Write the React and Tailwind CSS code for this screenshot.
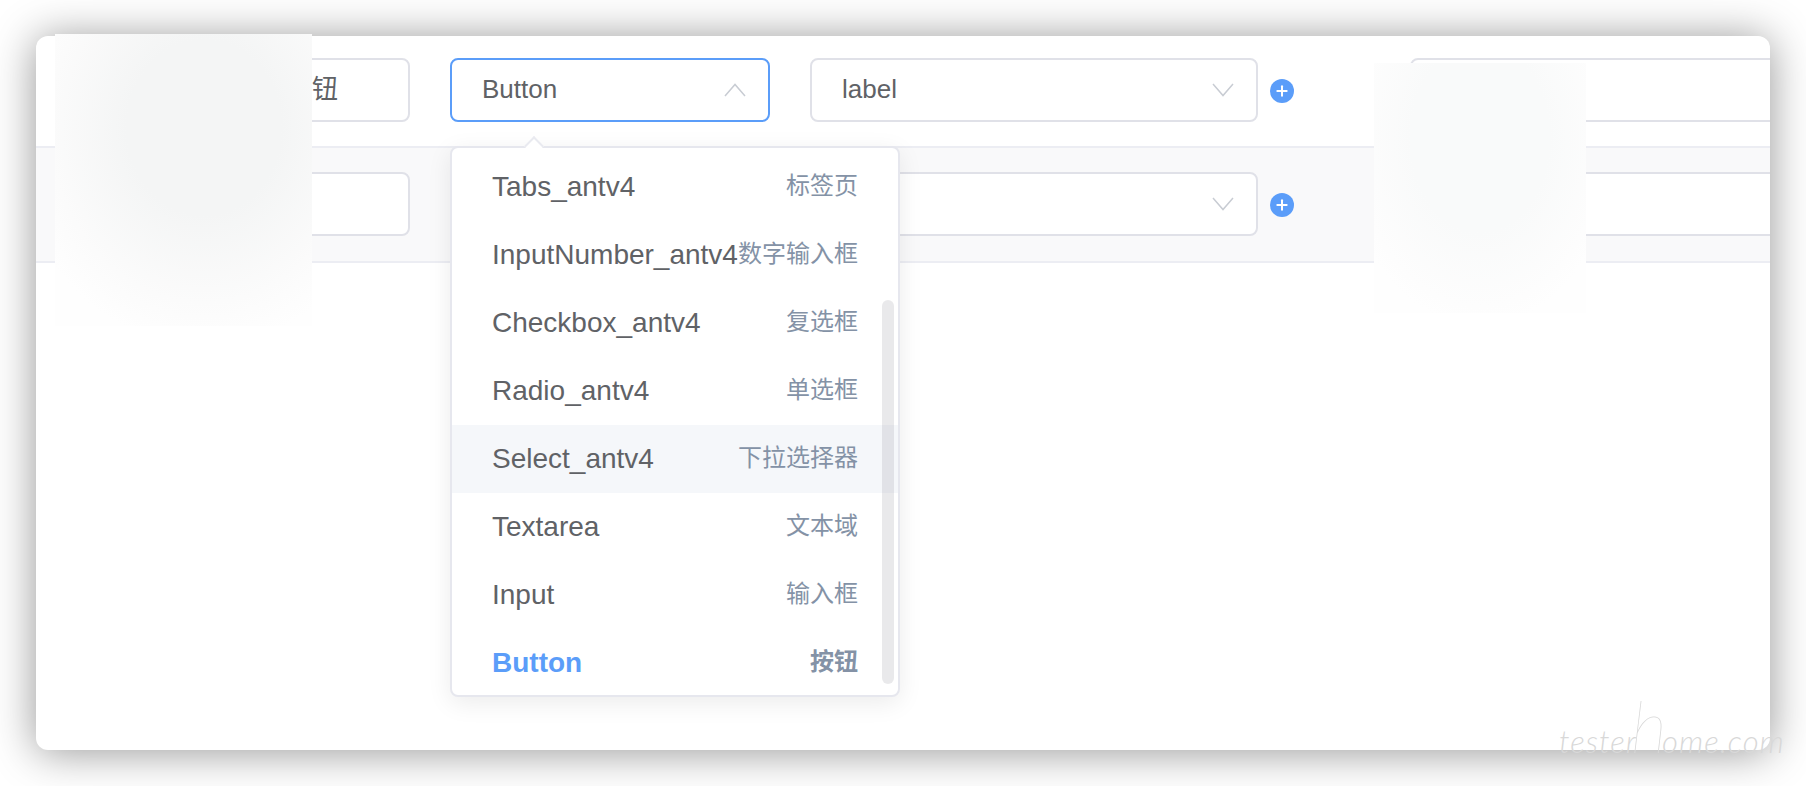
import { Plus } from 'lucide-react';

const options = [
  ['Tabs_antv4', '标签页'],
  ['InputNumber_antv4', '数字输入框'],
  ['Checkbox_antv4', '复选框'],
  ['Radio_antv4', '单选框'],
  ['Select_antv4', '下拉选择器'],
  ['Textarea', '文本域'],
  ['Input', '输入框'],
  ['Button', '按钮'],
];

function Chevron({ up }) {
  return (
    <svg width="22" height="14" viewBox="0 0 22 14" fill="none" stroke="#c8ccd3" strokeWidth="1.5" className="shrink-0">
      <path d={up ? 'M1 13 L11 1.5 L21 13' : 'M1 1 L11 12.5 L21 1'} />
    </svg>
  );
}

function TextBox({ value, className }) {
  return (
    <div className={`h-16 shrink-0 rounded-lg border-2 border-[#e0e1e8] bg-white flex items-center text-[26px] text-[#606266] ${className}`}>
      {value}
    </div>
  );
}

function SelectBox({ value, open, className }) {
  return (
    <div className={`h-16 shrink-0 rounded-lg border-2 bg-white flex items-center justify-between pl-[30px] pr-[22px] text-[26px] text-[#606266] ${open ? 'border-[#5b9df9]' : 'border-[#e0e1e8]'} ${className}`}>
      <span>{value}</span>
      <Chevron up={open} />
    </div>
  );
}

function AddButton() {
  return (
    <div className="w-6 h-6 ml-3 mt-0.5 shrink-0 rounded-full bg-[#5b9df9] flex items-center justify-center">
      <Plus size={16} color="white" strokeWidth={3} />
    </div>
  );
}

function Row({ name, type, field, open, striped }) {
  return (
    <div className={`flex items-center pl-[224px] border-b-2 border-[#ecedf3] ${striped ? 'h-[115px] pb-0.5 bg-[#f9f9fa]' : 'h-[112px] pb-[3px]'}`}>
      <TextBox value={name} className="w-[150px] pl-6" />
      <SelectBox value={type} open={open} className="w-[320px] ml-[40px]" />
      <SelectBox value={field} className="w-[448px] ml-[40px]" />
      <AddButton />
      <TextBox className="w-[500px] ml-[116px]" />
    </div>
  );
}

export default function App() {
  return (
    <div className="relative h-[786px] overflow-hidden bg-white pt-9 px-9 font-['Liberation_Sans','Noto_Sans_CJK_SC',sans-serif]">
      <div className="relative h-[714px] rounded-xl bg-white overflow-hidden shadow-[0_2px_44px_rgba(0,0,0,0.42)]">
        <Row name="按钮" type="Button" field="label" open />
        <Row striped />

        {/* dropdown */}
        <div className="absolute left-[414px] top-[110px] w-[450px] h-[551px] pt-[5px] rounded-lg border-2 border-[#e6e7ee] bg-white shadow-[0_6px_24px_rgba(0,0,0,0.08)] overflow-hidden">
          {options.map(([name, desc]) => {
            const active = name === 'Button';
            return (
              <div key={name} className={`h-[68px] flex items-center justify-between pl-[40px] pr-[40px] ${name === 'Select_antv4' ? 'bg-[#f5f7fa]' : ''}`}>
                <span className={`text-[28px] whitespace-nowrap ${active ? 'font-bold text-[#5b9df9]' : 'text-[#606266]'}`}>{name}</span>
                <span className={`text-[24px] -mt-0.5 whitespace-nowrap ${active ? 'font-bold text-[#8492a6]' : 'text-[#8492a6]'}`}>{desc}</span>
              </div>
            );
          })}
          <div className="absolute right-[4px] top-[152px] w-3 h-[384px] rounded-md bg-[#90939933]" />
        </div>
        <div className="absolute left-[491px] top-[103px] w-[14px] h-[14px] rotate-45 bg-white border-l-2 border-t-2 border-[#e9eaf0]" />
      </div>

      {/* blurred patches */}
      <div className="absolute left-[55px] top-[34px] w-[257px] h-[292px] bg-[radial-gradient(ellipse_75%_75%_at_58%_32%,#f4f5f5_40%,#fbfbfb_80%,#fefefe_100%)]" />
      <div className="absolute left-[1374px] top-[63px] w-[212px] h-[250px] bg-[radial-gradient(ellipse_65%_75%_at_50%_30%,#f9fafa_50%,#fdfdfd_90%,#fefefe_100%)]" />

      <div className="absolute left-[1559px] top-[690px] h-[80px] flex items-baseline text-[31px] leading-[70px] italic font-light tracking-[1px] text-[#d8d8d8] whitespace-nowrap font-['Lato',sans-serif]">
        <span>tester</span>
        <span className="text-[72px] font-thin -mx-1.5">h</span>
        <span>ome.com</span>
      </div>
    </div>
  );
}
